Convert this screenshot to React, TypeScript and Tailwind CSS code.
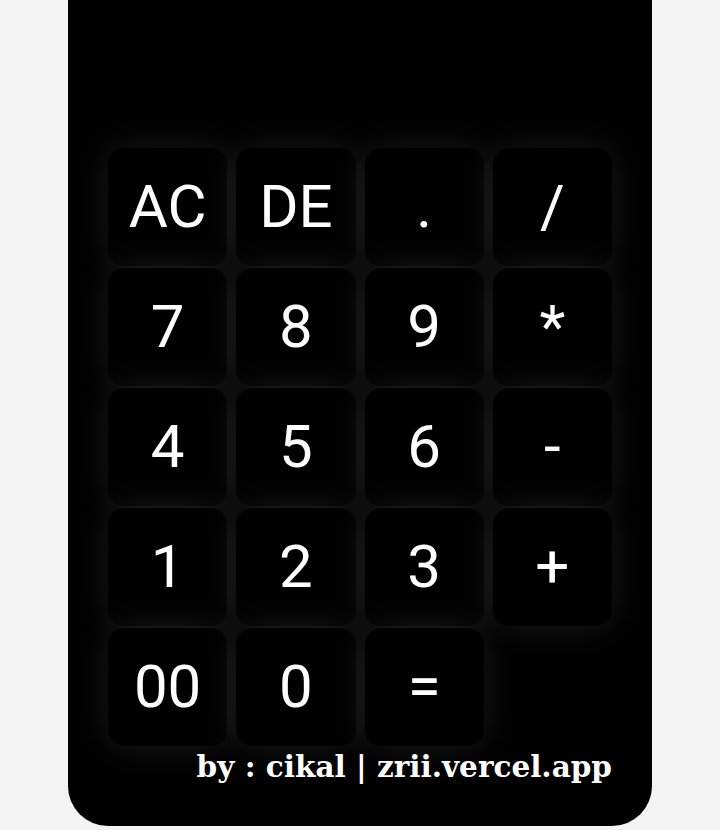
const keys = ["AC", "DE", ".", "/", "7", "8", "9", "*", "4", "5", "6", "-", "1", "2", "3", "+", "00", "0", "="];

export default function App() {
  return (
    <div className="min-h-[830px] w-full bg-[#f3f3f3] flex justify-center">
      <div className="w-[584px] h-[826px] bg-black rounded-b-[40px] px-[40px] flex flex-col">
        {/* display area */}
        <div className="h-[148px] shrink-0" />
        <div className="grid grid-cols-4 gap-x-[9px] gap-y-[2px]">
          {keys.map((k) => (
            <button
              key={k}
              className="h-[118px] rounded-[16px] bg-black text-white text-[60px] leading-none shadow-[0_0_36px_rgba(255,255,255,0.1)] font-['Roboto',sans-serif] flex items-center justify-center"
            >
              {k}
            </button>
          ))}
        </div>
        <p className="mt-[1px] text-right text-white font-bold text-[29.5px] font-['DejaVu_Serif',serif] leading-[40px]">
          by : cikal | zrii.vercel.app
        </p>
      </div>
    </div>
  );
}
